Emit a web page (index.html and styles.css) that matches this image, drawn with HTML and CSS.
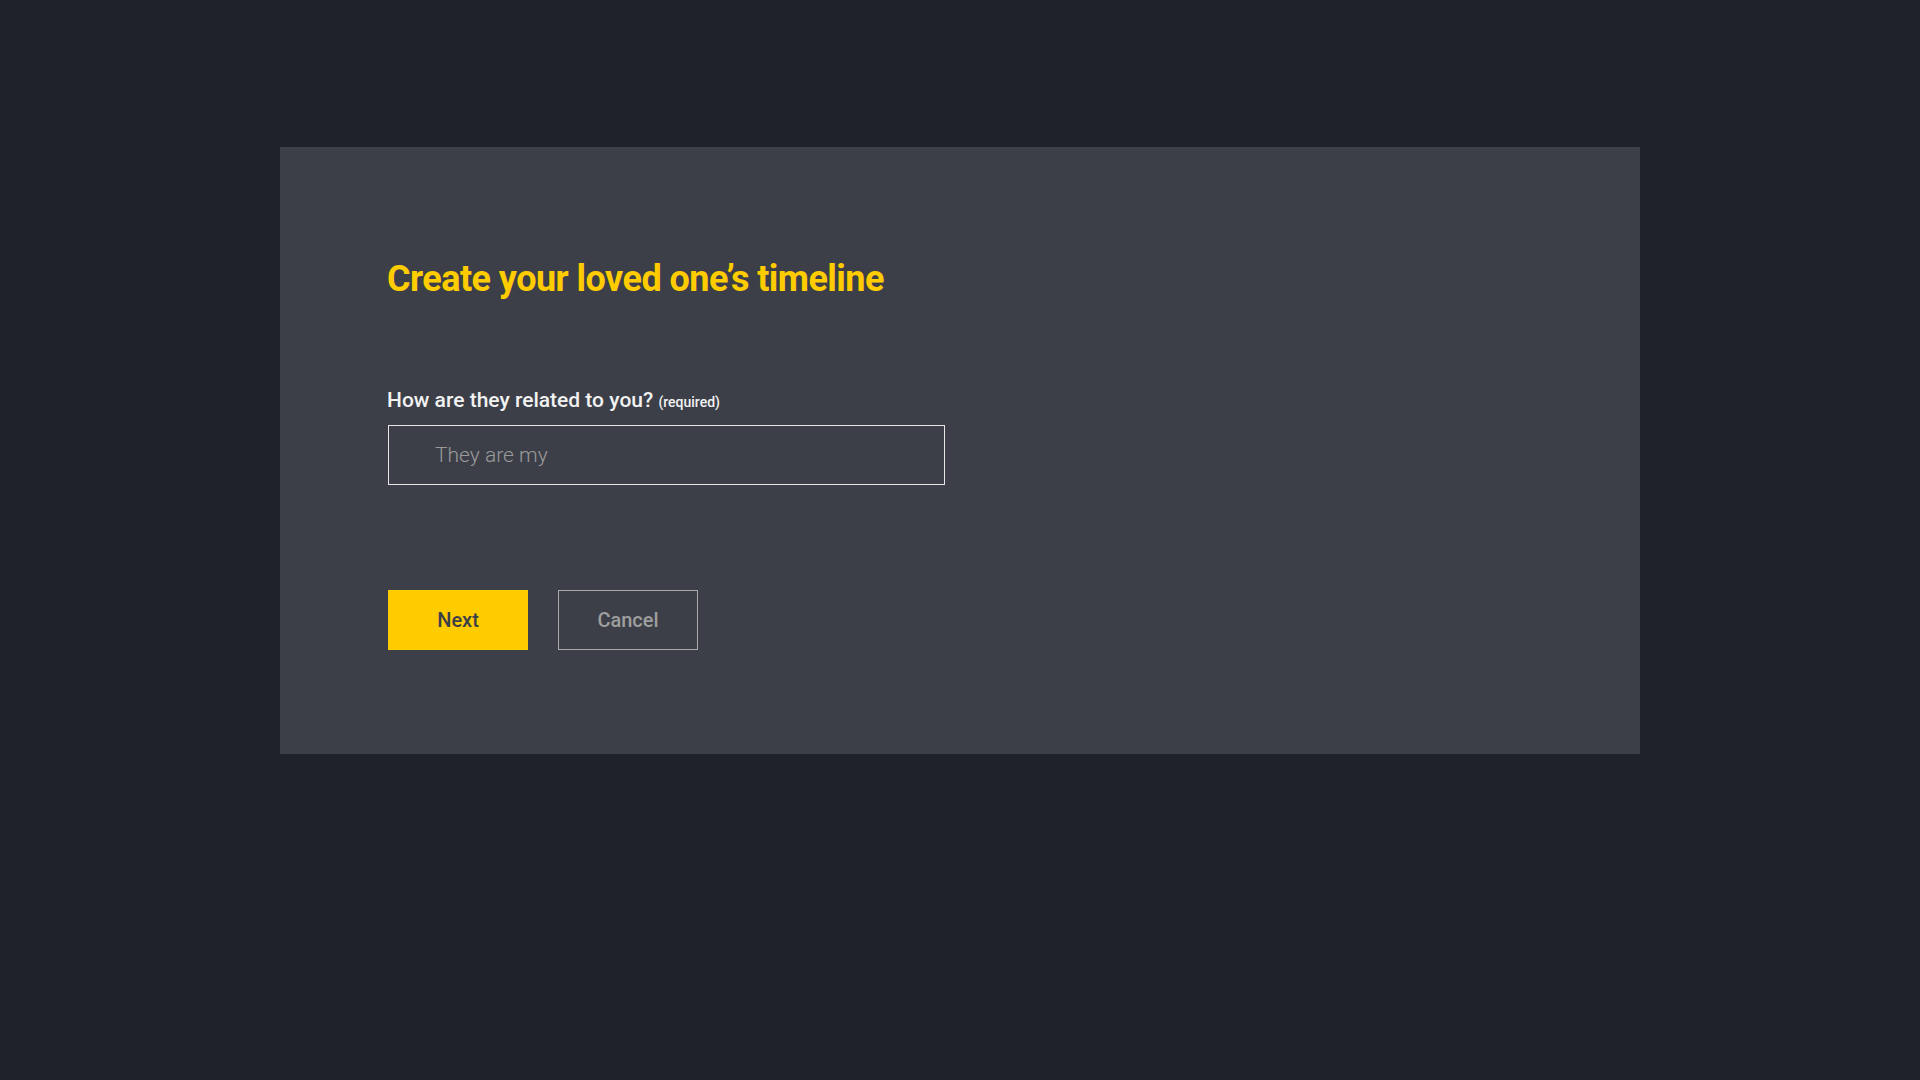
FILE: index.html
```html
<!DOCTYPE html>
<html lang="en">
<head>
  <meta charset="UTF-8">
  <meta name="viewport" content="width=device-width, initial-scale=1.0">
  <title>Create timeline</title>
  <link rel="stylesheet" href="styles.css">
</head>
<body>
  <div class="card">
    <h1 class="title">Create your loved one’s timeline</h1>

    <form class="timeline-form" onsubmit="return false">
      <label class="field-label" for="relation">How are they related to you? <span class="required">(required)</span></label>
      <input type="text" id="relation" class="field-input" placeholder="They are my">

      <div class="actions">
        <button type="submit" class="btn btn-primary">Next</button>
        <button type="button" class="btn btn-secondary">Cancel</button>
      </div>
    </form>
  </div>
</body>
</html>
```

FILE: styles.css
```css
body {
  font-family: Roboto, "Liberation Sans", Arial, sans-serif;
  margin: 0;
  padding: 0;
  background-color: #1f222b;
  min-height: 100vh;
}
.card {
  width: 1360px;
  box-sizing: border-box;
  margin: 147px 0 0 280px;
  padding: 111px 107px 104px;
  background-color: #3c3f48;
}
.title {
  margin: 0;
  font-size: 36px;
  font-weight: 700;
  line-height: 42px;
  color: #ffcc00;
  letter-spacing: -0.55px;
}
.timeline-form {
  display: flex;
  flex-direction: column;
  align-items: flex-start;
  margin-top: 89px;
}
.field-label {
  font-size: 21px;
  font-weight: 500;
  line-height: 23px;
  color: #f2f2f2;
}
.required {
  font-size: 14px;
  font-weight: 500;
}
.field-input {
  margin: 11px 0 0 1px;
  width: 557px;
  height: 60px;
  box-sizing: border-box;
  padding: 0 0 0 46px;
  border: 1px solid #e6e6e6;
  background: transparent;
  font-family: inherit;
  font-size: 21px;
  font-weight: 300;
  color: #f2f2f2;
  outline: none;
}
.field-input::placeholder {
  color: #9a9a9a;
}
.actions {
  display: flex;
  gap: 30px;
  margin: 105px 0 0 1px;
}
.btn {
  width: 140px;
  height: 60px;
  box-sizing: border-box;
  font-family: inherit;
  font-size: 20px;
  font-weight: 500;
  cursor: pointer;
}
.btn-primary {
  background-color: #ffcc00;
  border: 1px solid #ffcc00;
  color: #3c3f48;
}
.btn-secondary {
  background: transparent;
  border: 1px solid #a9a9a9;
  color: #9e9e9e;
}
```
